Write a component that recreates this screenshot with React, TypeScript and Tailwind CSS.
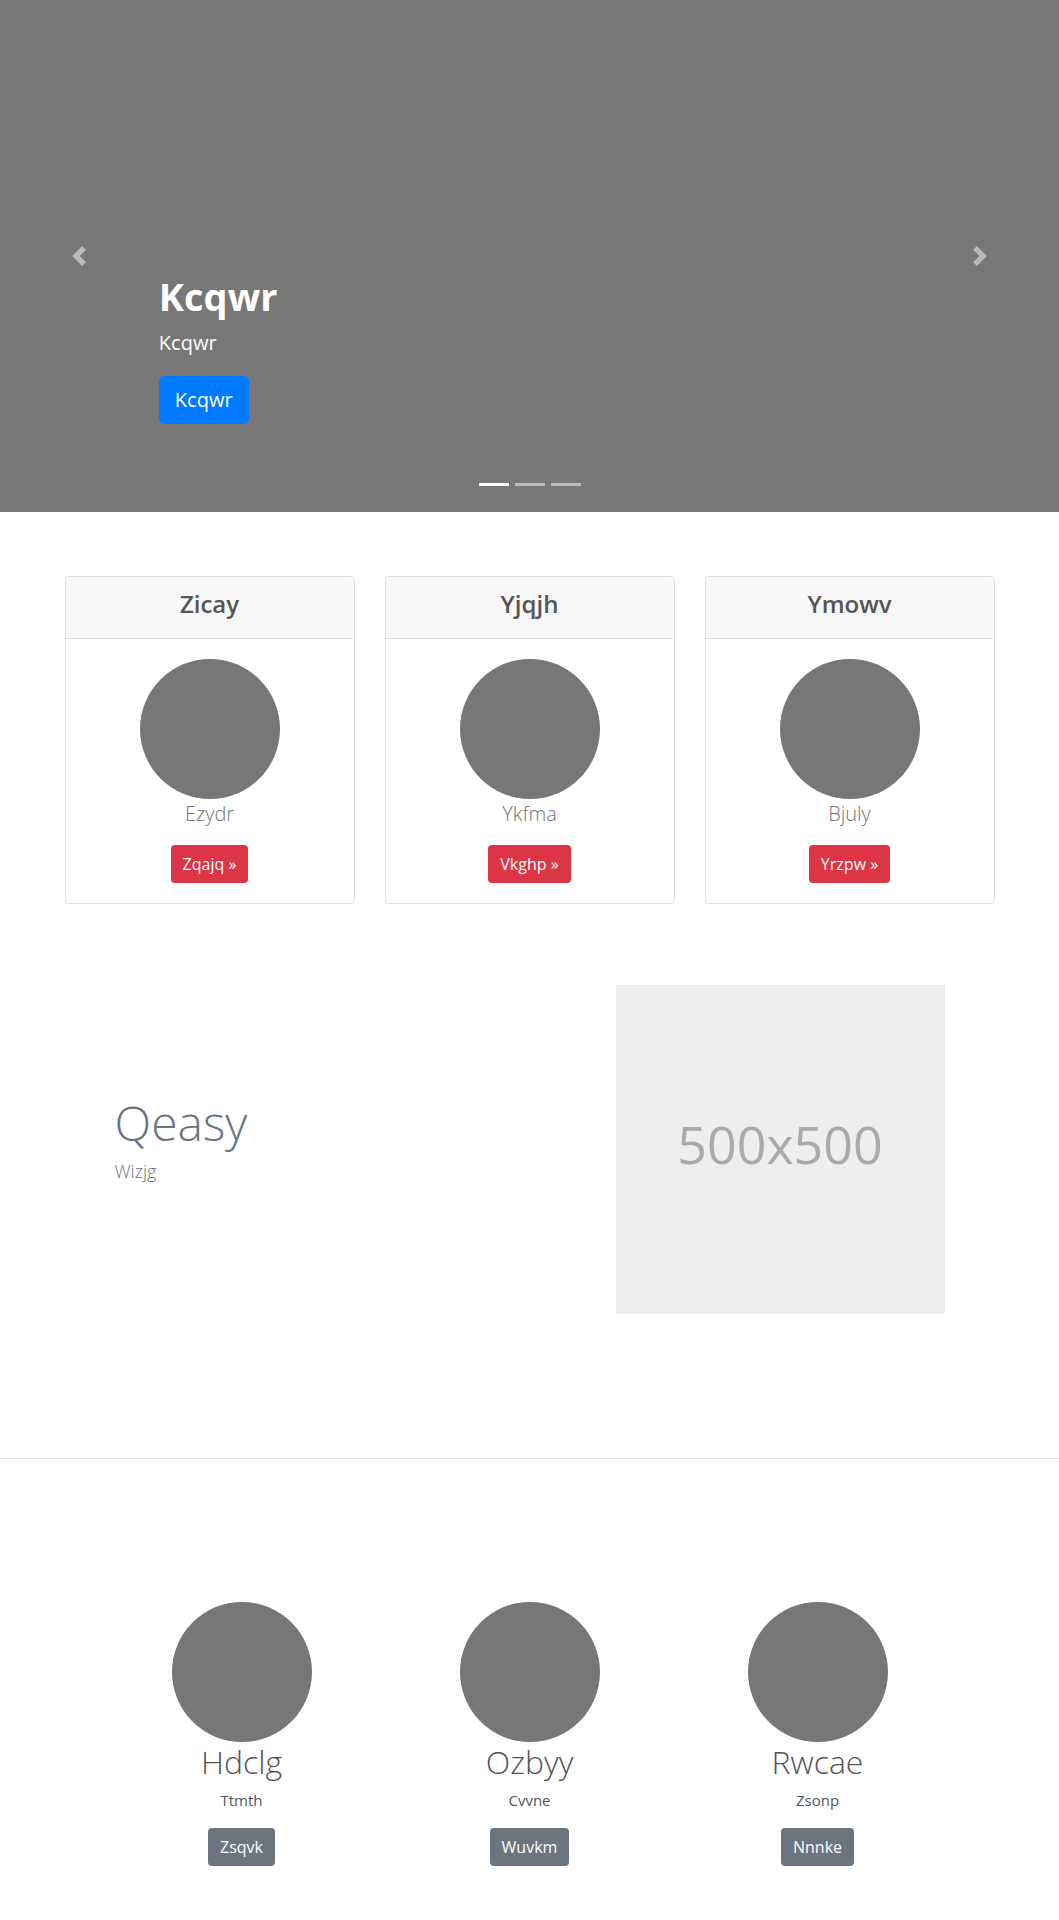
import React from "react";

const cards = [
  { title: "Zicay", sub: "Ezydr", btn: "Zqajq" },
  { title: "Yjqjh", sub: "Ykfma", btn: "Vkghp" },
  { title: "Ymowv", sub: "Bjuly", btn: "Yrzpw" },
];

const people = [
  { name: "Hdclg", sub: "Ttmth", btn: "Zsqvk" },
  { name: "Ozbyy", sub: "Cvvne", btn: "Wuvkm" },
  { name: "Rwcae", sub: "Zsonp", btn: "Nnnke" },
];

export default function App() {
  return (
    <div className="w-full bg-white font-['Open_Sans','Noto_Sans',sans-serif] pb-[54px]">
      {/* Hero carousel */}
      <section className="relative h-[512px] bg-[#777777]">
        <div className="flex h-full flex-col items-start pl-[15%] pt-[272px]">
          <h1 className="m-0 text-[38px] font-bold leading-[48px] text-white">Kcqwr</h1>
          <p className="mt-[8px] mb-[18px] text-[20px] leading-[30px] text-white">Kcqwr</p>
          <button className="h-[48px] rounded-[5px] bg-[#007bff] px-[16px] text-[20px] leading-[30px] text-white">
            Kcqwr
          </button>
        </div>
        <div className="absolute left-0 top-0 flex h-full w-[15%] items-center justify-center opacity-50">
          <svg width="20" height="20" viewBox="0 0 8 8" fill="#fff">
            <path d="M5.25 0l-4 4 4 4 1.5-1.5L4.25 4l2.5-2.5L5.25 0z" />
          </svg>
        </div>
        <div className="absolute right-0 top-0 flex h-full w-[15%] items-center justify-center opacity-50">
          <svg width="20" height="20" viewBox="0 0 8 8" fill="#fff">
            <path d="M2.75 0l-1.5 1.5L3.75 4l-2.5 2.5L2.75 8l4-4-4-4z" />
          </svg>
        </div>
        <div className="absolute bottom-[26px] left-0 right-0 flex justify-center gap-[6px]">
          <span className="block h-[3px] w-[30px] bg-white" />
          <span className="block h-[3px] w-[30px] bg-[#bbbbbb]" />
          <span className="block h-[3px] w-[30px] bg-[#bbbbbb]" />
        </div>
      </section>

      {/* Cards */}
      <section className="pt-[64px]">
        <div className="mx-auto grid w-[930px] grid-cols-3 gap-[30px]">
          {cards.map((c) => (
            <div key={c.title} className="overflow-hidden rounded-[4px] border border-[#dfdfdf]">
              <div className="h-[62px] border-b border-[#dfdfdf] bg-[#f7f7f7] pt-[12px] text-center">
                <h4 className="m-0 text-[24px] font-semibold leading-[29px] text-[#555555]">{c.title}</h4>
              </div>
              <div className="flex flex-col items-center pt-[20px] pb-[20px]">
                <div className="h-[140px] w-[140px] rounded-full bg-[#777777]" />
                <p className="m-0 mb-[16px] text-[20px] font-light leading-[30px] text-[#6c757d]">{c.sub}</p>
                <button className="h-[38px] rounded-[4px] bg-[#dc3545] px-[12px] text-[16px] leading-[24px] text-white">
                  {c.btn} »
                </button>
              </div>
            </div>
          ))}
        </div>
      </section>

      {/* Feature */}
      <section className="mt-[81px]">
        <div className="mx-auto flex w-[930px] justify-between">
          <div className="pl-[50px] pt-[109px]">
            <h2 className="m-0 text-[48px] font-light leading-[57.6px] text-[#6c757d]">Qeasy</h2>
            <p className="m-0 mt-[6px] text-[18px] font-light leading-[27px] text-[#6c757d]">Wizjg</p>
          </div>
          <div className="mr-[50px] flex h-[329px] w-[329px] items-center justify-center bg-[#eeeeee] pb-[12px]">
            <span className="text-[52px] leading-none text-[#aaaaaa]">500x500</span>
          </div>
        </div>
      </section>

      <hr className="mt-[144px] border-0 border-t border-[#e1e1e1]" />

      {/* People */}
      <section className="pt-[143px]">
        <div className="mx-auto grid w-[864px] grid-cols-3">
          {people.map((p) => (
            <div key={p.name} className="flex flex-col items-center">
              <div className="h-[140px] w-[140px] rounded-full bg-[#777777]" />
              <h2 className="m-0 mt-[1px] mb-[8px] text-[32px] font-light leading-[38.4px] text-[#555555]">{p.name}</h2>
              <p className="m-0 mb-[16px] text-[15px] leading-[22.5px] text-[#555555]">{p.sub}</p>
              <button className="h-[38px] rounded-[4px] bg-[#6c757d] px-[12px] text-[16px] leading-[24px] text-white">
                {p.btn}
              </button>
            </div>
          ))}
        </div>
      </section>
    </div>
  );
}
